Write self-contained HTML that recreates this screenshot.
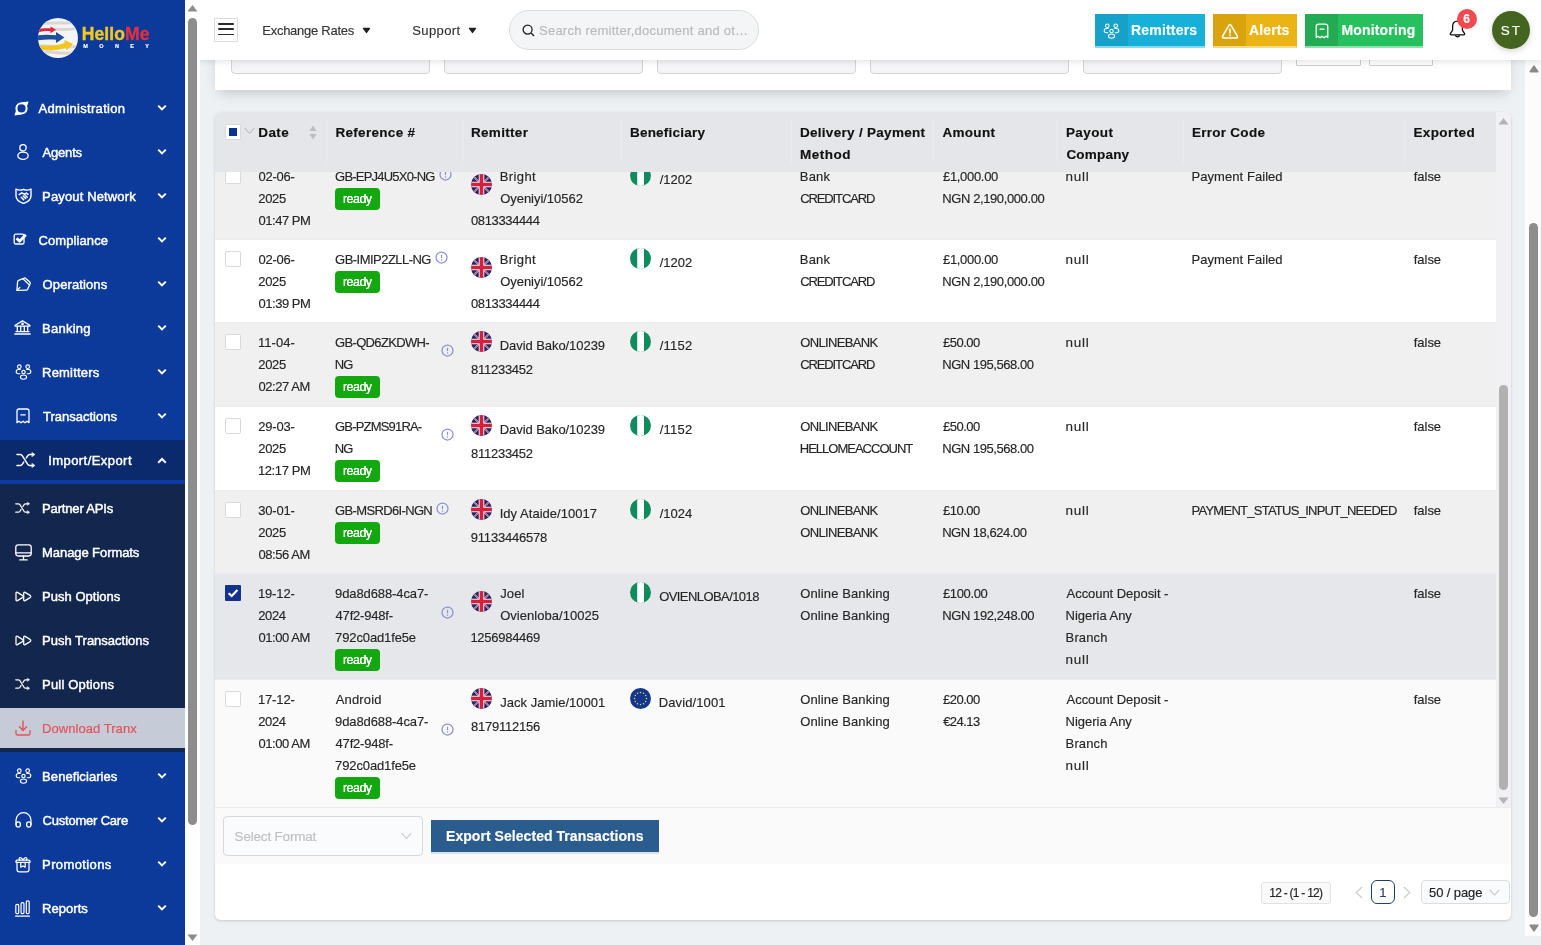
<!DOCTYPE html>
<html lang="en"><head><meta charset="utf-8"><title>HelloMe Money - Download Tranx</title>
<style>
*{box-sizing:border-box}
html,body{margin:0;padding:0;background:#eef1f3}
body{width:1541px;height:945px;overflow:hidden;position:relative;font-family:"Liberation Sans",sans-serif;font-size:13px;color:#262626}
#app{position:absolute;left:0;top:0;width:1541px;height:945px;overflow:hidden;will-change:transform}
#app div,#app span.t,#app svg,#app i{position:absolute}
.t{white-space:pre;display:block;line-height:22px;-webkit-text-stroke:.15px currentColor}
.sb .t{color:#fff}
.chk{width:16px;height:16px;background:#fff;border:1px solid #d9d9d9;border-radius:2px}
.badge{width:45px;height:22px;background:#13a710;border-radius:4px}
.inp{border:1px solid #d4d4d4;border-radius:4px;background:#f5f5f7}
</style></head><body><div id="app">
<main>
<div style="left:215px;top:0px;width:1296px;height:90px;background:#fff;box-shadow:0 6px 13px -4px rgba(0,0,0,.2)"></div>
<div class="inp" style="left:231px;top:30px;width:199px;height:44px;"></div>
<div class="inp" style="left:444px;top:30px;width:199px;height:44px;"></div>
<div class="inp" style="left:657px;top:30px;width:199px;height:44px;"></div>
<div class="inp" style="left:870px;top:30px;width:199px;height:44px;"></div>
<div class="inp" style="left:1083px;top:30px;width:199px;height:44px;"></div>
<div style="left:1296px;top:30px;width:65px;height:36px;border:1px solid #cfcfcf;border-radius:1px;background:#fff"></div>
<div style="left:1369px;top:30px;width:64px;height:36px;border:1px solid #cfcfcf;border-radius:1px;background:#fff"></div>
<div style="left:215px;top:112px;width:1296px;height:808px;background:#fff;border-radius:6px;box-shadow:0 1px 3px rgba(0,0,0,.16)"></div>
<section>
<div style="left:215px;top:157px;width:1281px;height:83px;background:#f0f0f0;border-bottom:1px solid #ececec"></div>
<div class="chk" style="left:225px;top:168px;width:16px;height:16px;"></div>
<span class="t" style="left:258.49px;top:166px;letter-spacing:-0.24px;">02-06-</span>
<span class="t" style="left:258.32px;top:188px;letter-spacing:-0.33px;">2025</span>
<span class="t" style="left:258.49px;top:210px;letter-spacing:-0.46px;">01:47 PM</span>
<span class="t" style="left:335.09px;top:166px;letter-spacing:-0.79px;">GB-EPJ4U5X0-NG</span>
<div class="badge" style="left:335px;top:188px;width:45px;height:22px;"></div>
<span class="t" style="left:343.00px;top:188px;font-size:12.5px;color:#fff;letter-spacing:-0.55px;text-shadow:0 0 .5px #fff;">ready</span>
<svg style="left:438.7px;top:167.5px" width="13" height="13" viewBox="0 0 13 13"><circle cx="6.5" cy="6.5" r="5.5" fill="none" stroke="#8c90d2" stroke-width="1.25"/><path d="M6.5 3.8V7.2" stroke="#8c90d2" stroke-width="1.2"/><circle cx="6.5" cy="9.1" r=".75" fill="#8c90d2"/></svg>
<svg style="left:471px;top:174px;border-radius:50%" width="21" height="21" viewBox="0 0 21 21"><g><rect width="21" height="21" fill="#2a2460"/><path d="M0 0L21 21M21 0L0 21" stroke="#b9b0cc" stroke-width="1.8"/><path d="M0 0L21 21M21 0L0 21" stroke="#c8364f" stroke-width=".6"/><path d="M10.5 0V21M0 10.5H21" stroke="#f6e9ec" stroke-width="5.6"/><path d="M10.5 0V21M0 10.5H21" stroke="#d41f3d" stroke-width="3.6"/></g></svg>
<span class="t" style="left:499.70px;top:166px;letter-spacing:0.40px;">Bright</span>
<span class="t" style="left:500.15px;top:188px;letter-spacing:-0.03px;">Oyeniyi/10562</span>
<span class="t" style="left:470.99px;top:210px;letter-spacing:-0.37px;">0813334444</span>
<svg style="left:630px;top:165px;border-radius:50%" width="21" height="21" viewBox="0 0 21 21"><g><rect width="21" height="21" fill="#0f8c5e"/><rect x="7.2" width="6.8" height="21" fill="#fff"/></g></svg>
<span class="t" style="left:659.70px;top:169px;">/1202</span>
<span class="t" style="left:799.80px;top:166px;letter-spacing:0.16px;">Bank</span>
<span class="t" style="left:800.19px;top:188px;letter-spacing:-1.11px;">CREDITCARD</span>
<span class="t" style="left:943.00px;top:166px;letter-spacing:-0.32px;">£1,000.00</span>
<span class="t" style="left:942.20px;top:188px;letter-spacing:-0.39px;">NGN 2,190,000.00</span>
<span class="t" style="left:1065.60px;top:166px;font-size:13.5px;letter-spacing:0.73px;">null</span>
<span class="t" style="left:1191.50px;top:166px;letter-spacing:0.06px;">Payment Failed</span>
<span class="t" style="left:1413.77px;top:166px;letter-spacing:-0.04px;">false</span>
<div style="left:215px;top:240px;width:1281px;height:83px;background:#ffffff;border-bottom:1px solid #ececec"></div>
<div class="chk" style="left:225px;top:251px;width:16px;height:16px;"></div>
<span class="t" style="left:258.49px;top:249px;letter-spacing:-0.24px;">02-06-</span>
<span class="t" style="left:258.32px;top:271px;letter-spacing:-0.33px;">2025</span>
<span class="t" style="left:258.49px;top:293px;letter-spacing:-0.46px;">01:39 PM</span>
<span class="t" style="left:335.09px;top:249px;letter-spacing:-0.53px;">GB-IMIP2ZLL-NG</span>
<div class="badge" style="left:335px;top:271px;width:45px;height:22px;"></div>
<span class="t" style="left:343.00px;top:271px;font-size:12.5px;color:#fff;letter-spacing:-0.55px;text-shadow:0 0 .5px #fff;">ready</span>
<svg style="left:434.7px;top:250.5px" width="13" height="13" viewBox="0 0 13 13"><circle cx="6.5" cy="6.5" r="5.5" fill="none" stroke="#8c90d2" stroke-width="1.25"/><path d="M6.5 3.8V7.2" stroke="#8c90d2" stroke-width="1.2"/><circle cx="6.5" cy="9.1" r=".75" fill="#8c90d2"/></svg>
<svg style="left:471px;top:257px;border-radius:50%" width="21" height="21" viewBox="0 0 21 21"><g><rect width="21" height="21" fill="#2a2460"/><path d="M0 0L21 21M21 0L0 21" stroke="#b9b0cc" stroke-width="1.8"/><path d="M0 0L21 21M21 0L0 21" stroke="#c8364f" stroke-width=".6"/><path d="M10.5 0V21M0 10.5H21" stroke="#f6e9ec" stroke-width="5.6"/><path d="M10.5 0V21M0 10.5H21" stroke="#d41f3d" stroke-width="3.6"/></g></svg>
<span class="t" style="left:499.70px;top:249px;letter-spacing:0.40px;">Bright</span>
<span class="t" style="left:500.15px;top:271px;letter-spacing:-0.03px;">Oyeniyi/10562</span>
<span class="t" style="left:470.99px;top:293px;letter-spacing:-0.37px;">0813334444</span>
<svg style="left:630px;top:248px;border-radius:50%" width="21" height="21" viewBox="0 0 21 21"><g><rect width="21" height="21" fill="#0f8c5e"/><rect x="7.2" width="6.8" height="21" fill="#fff"/></g></svg>
<span class="t" style="left:659.70px;top:252px;">/1202</span>
<span class="t" style="left:799.80px;top:249px;letter-spacing:0.16px;">Bank</span>
<span class="t" style="left:800.19px;top:271px;letter-spacing:-1.11px;">CREDITCARD</span>
<span class="t" style="left:943.00px;top:249px;letter-spacing:-0.32px;">£1,000.00</span>
<span class="t" style="left:942.20px;top:271px;letter-spacing:-0.39px;">NGN 2,190,000.00</span>
<span class="t" style="left:1065.60px;top:249px;font-size:13.5px;letter-spacing:0.73px;">null</span>
<span class="t" style="left:1191.50px;top:249px;letter-spacing:0.06px;">Payment Failed</span>
<span class="t" style="left:1413.77px;top:249px;letter-spacing:-0.04px;">false</span>
<div style="left:215px;top:323px;width:1281px;height:84px;background:#f0f0f0;border-bottom:1px solid #ececec"></div>
<div class="chk" style="left:225px;top:334px;width:16px;height:16px;"></div>
<span class="t" style="left:257.90px;top:332px;letter-spacing:0.08px;">11-04-</span>
<span class="t" style="left:258.32px;top:354px;letter-spacing:-0.33px;">2025</span>
<span class="t" style="left:258.49px;top:376px;letter-spacing:-0.45px;">02:27 AM</span>
<span class="t" style="left:335.09px;top:332px;letter-spacing:-0.67px;">GB-QD6ZKDWH-</span>
<span class="t" style="left:334.70px;top:354px;letter-spacing:-0.82px;">NG</span>
<div class="badge" style="left:335px;top:376px;width:45px;height:22px;"></div>
<span class="t" style="left:343.00px;top:376px;font-size:12.5px;color:#fff;letter-spacing:-0.55px;text-shadow:0 0 .5px #fff;">ready</span>
<svg style="left:441.1px;top:343.9px" width="13" height="13" viewBox="0 0 13 13"><circle cx="6.5" cy="6.5" r="5.5" fill="none" stroke="#8c90d2" stroke-width="1.25"/><path d="M6.5 3.8V7.2" stroke="#8c90d2" stroke-width="1.2"/><circle cx="6.5" cy="9.1" r=".75" fill="#8c90d2"/></svg>
<svg style="left:471px;top:331px;border-radius:50%" width="21" height="21" viewBox="0 0 21 21"><g><rect width="21" height="21" fill="#2a2460"/><path d="M0 0L21 21M21 0L0 21" stroke="#b9b0cc" stroke-width="1.8"/><path d="M0 0L21 21M21 0L0 21" stroke="#c8364f" stroke-width=".6"/><path d="M10.5 0V21M0 10.5H21" stroke="#f6e9ec" stroke-width="5.6"/><path d="M10.5 0V21M0 10.5H21" stroke="#d41f3d" stroke-width="3.6"/></g></svg>
<span class="t" style="left:499.70px;top:335px;letter-spacing:-0.06px;">David Bako/10239</span>
<span class="t" style="left:470.90px;top:359px;letter-spacing:-0.24px;">811233452</span>
<svg style="left:630px;top:331px;border-radius:50%" width="21" height="21" viewBox="0 0 21 21"><g><rect width="21" height="21" fill="#0f8c5e"/><rect x="7.2" width="6.8" height="21" fill="#fff"/></g></svg>
<span class="t" style="left:659.70px;top:335px;letter-spacing:0.25px;">/1152</span>
<span class="t" style="left:800.25px;top:332px;letter-spacing:-0.65px;">ONLINEBANK</span>
<span class="t" style="left:800.19px;top:354px;letter-spacing:-1.11px;">CREDITCARD</span>
<span class="t" style="left:943.00px;top:332px;letter-spacing:-0.52px;">£50.00</span>
<span class="t" style="left:942.20px;top:354px;letter-spacing:-0.45px;">NGN 195,568.00</span>
<span class="t" style="left:1065.60px;top:332px;font-size:13.5px;letter-spacing:0.73px;">null</span>
<span class="t" style="left:1413.77px;top:332px;letter-spacing:-0.04px;">false</span>
<div style="left:215px;top:407px;width:1281px;height:84px;background:#ffffff;border-bottom:1px solid #ececec"></div>
<div class="chk" style="left:225px;top:418px;width:16px;height:16px;"></div>
<span class="t" style="left:258.32px;top:416px;letter-spacing:-0.20px;">29-03-</span>
<span class="t" style="left:258.32px;top:438px;letter-spacing:-0.33px;">2025</span>
<span class="t" style="left:257.90px;top:460px;letter-spacing:-0.38px;">12:17 PM</span>
<span class="t" style="left:335.09px;top:416px;letter-spacing:-0.82px;">GB-PZMS91RA-</span>
<span class="t" style="left:334.70px;top:438px;letter-spacing:-0.82px;">NG</span>
<div class="badge" style="left:335px;top:460px;width:45px;height:22px;"></div>
<span class="t" style="left:343.00px;top:460px;font-size:12.5px;color:#fff;letter-spacing:-0.55px;text-shadow:0 0 .5px #fff;">ready</span>
<svg style="left:441.1px;top:427.9px" width="13" height="13" viewBox="0 0 13 13"><circle cx="6.5" cy="6.5" r="5.5" fill="none" stroke="#8c90d2" stroke-width="1.25"/><path d="M6.5 3.8V7.2" stroke="#8c90d2" stroke-width="1.2"/><circle cx="6.5" cy="9.1" r=".75" fill="#8c90d2"/></svg>
<svg style="left:471px;top:415px;border-radius:50%" width="21" height="21" viewBox="0 0 21 21"><g><rect width="21" height="21" fill="#2a2460"/><path d="M0 0L21 21M21 0L0 21" stroke="#b9b0cc" stroke-width="1.8"/><path d="M0 0L21 21M21 0L0 21" stroke="#c8364f" stroke-width=".6"/><path d="M10.5 0V21M0 10.5H21" stroke="#f6e9ec" stroke-width="5.6"/><path d="M10.5 0V21M0 10.5H21" stroke="#d41f3d" stroke-width="3.6"/></g></svg>
<span class="t" style="left:499.70px;top:419px;letter-spacing:-0.06px;">David Bako/10239</span>
<span class="t" style="left:470.90px;top:443px;letter-spacing:-0.24px;">811233452</span>
<svg style="left:630px;top:415px;border-radius:50%" width="21" height="21" viewBox="0 0 21 21"><g><rect width="21" height="21" fill="#0f8c5e"/><rect x="7.2" width="6.8" height="21" fill="#fff"/></g></svg>
<span class="t" style="left:659.70px;top:419px;letter-spacing:0.25px;">/1152</span>
<span class="t" style="left:800.25px;top:416px;letter-spacing:-0.65px;">ONLINEBANK</span>
<span class="t" style="left:799.80px;top:438px;letter-spacing:-1.00px;">HELLOMEACCOUNT</span>
<span class="t" style="left:943.00px;top:416px;letter-spacing:-0.52px;">£50.00</span>
<span class="t" style="left:942.20px;top:438px;letter-spacing:-0.45px;">NGN 195,568.00</span>
<span class="t" style="left:1065.60px;top:416px;font-size:13.5px;letter-spacing:0.73px;">null</span>
<span class="t" style="left:1413.77px;top:416px;letter-spacing:-0.04px;">false</span>
<div style="left:215px;top:491px;width:1281px;height:83px;background:#f0f0f0;border-bottom:1px solid #ececec"></div>
<div class="chk" style="left:225px;top:502px;width:16px;height:16px;"></div>
<span class="t" style="left:258.23px;top:500px;letter-spacing:-0.19px;">30-01-</span>
<span class="t" style="left:258.32px;top:522px;letter-spacing:-0.33px;">2025</span>
<span class="t" style="left:258.49px;top:544px;letter-spacing:-0.45px;">08:56 AM</span>
<span class="t" style="left:335.09px;top:500px;letter-spacing:-0.65px;">GB-MSRD6I-NGN</span>
<div class="badge" style="left:335px;top:522px;width:45px;height:22px;"></div>
<span class="t" style="left:343.00px;top:522px;font-size:12.5px;color:#fff;letter-spacing:-0.55px;text-shadow:0 0 .5px #fff;">ready</span>
<svg style="left:435.7px;top:501.5px" width="13" height="13" viewBox="0 0 13 13"><circle cx="6.5" cy="6.5" r="5.5" fill="none" stroke="#8c90d2" stroke-width="1.25"/><path d="M6.5 3.8V7.2" stroke="#8c90d2" stroke-width="1.2"/><circle cx="6.5" cy="9.1" r=".75" fill="#8c90d2"/></svg>
<svg style="left:471px;top:499px;border-radius:50%" width="21" height="21" viewBox="0 0 21 21"><g><rect width="21" height="21" fill="#2a2460"/><path d="M0 0L21 21M21 0L0 21" stroke="#b9b0cc" stroke-width="1.8"/><path d="M0 0L21 21M21 0L0 21" stroke="#c8364f" stroke-width=".6"/><path d="M10.5 0V21M0 10.5H21" stroke="#f6e9ec" stroke-width="5.6"/><path d="M10.5 0V21M0 10.5H21" stroke="#d41f3d" stroke-width="3.6"/></g></svg>
<span class="t" style="left:499.70px;top:503px;letter-spacing:0.03px;">Idy Ataide/10017</span>
<span class="t" style="left:470.81px;top:527px;letter-spacing:-0.21px;">91133446578</span>
<svg style="left:630px;top:499px;border-radius:50%" width="21" height="21" viewBox="0 0 21 21"><g><rect width="21" height="21" fill="#0f8c5e"/><rect x="7.2" width="6.8" height="21" fill="#fff"/></g></svg>
<span class="t" style="left:659.70px;top:503px;">/1024</span>
<span class="t" style="left:800.25px;top:500px;letter-spacing:-0.65px;">ONLINEBANK</span>
<span class="t" style="left:800.25px;top:522px;letter-spacing:-0.65px;">ONLINEBANK</span>
<span class="t" style="left:943.00px;top:500px;letter-spacing:-0.52px;">£10.00</span>
<span class="t" style="left:942.20px;top:522px;letter-spacing:-0.47px;">NGN 18,624.00</span>
<span class="t" style="left:1065.60px;top:500px;font-size:13.5px;letter-spacing:0.73px;">null</span>
<span class="t" style="left:1191.50px;top:500px;letter-spacing:-0.74px;">PAYMENT_STATUS_INPUT_NEEDED</span>
<span class="t" style="left:1413.77px;top:500px;letter-spacing:-0.04px;">false</span>
<div style="left:215px;top:574px;width:1281px;height:106px;background:#e6e7ea;border-bottom:1px solid #ececec"></div>
<div style="left:225px;top:585px;width:16px;height:16px;background:#12328c;border-radius:1px"><svg style="left:2px;top:3px" width="12" height="10" viewBox="0 0 12 10"><path d="M1.6 5.2L4.7 8L10.4 2" fill="none" stroke="#fff" stroke-width="2.2"/></svg></div>
<span class="t" style="left:257.90px;top:583px;letter-spacing:-0.12px;">19-12-</span>
<span class="t" style="left:258.32px;top:605px;letter-spacing:-0.43px;">2024</span>
<span class="t" style="left:258.49px;top:627px;letter-spacing:-0.45px;">01:00 AM</span>
<span class="t" style="left:335.11px;top:583px;letter-spacing:-0.11px;">9da8d688-4ca7-</span>
<span class="t" style="left:335.59px;top:605px;letter-spacing:-0.20px;">47f2-948f-</span>
<span class="t" style="left:335.12px;top:627px;letter-spacing:-0.13px;">792c0ad1fe5e</span>
<div class="badge" style="left:335px;top:649px;width:45px;height:22px;"></div>
<span class="t" style="left:343.00px;top:649px;font-size:12.5px;color:#fff;letter-spacing:-0.55px;text-shadow:0 0 .5px #fff;">ready</span>
<svg style="left:441.1px;top:605.9px" width="13" height="13" viewBox="0 0 13 13"><circle cx="6.5" cy="6.5" r="5.5" fill="none" stroke="#8c90d2" stroke-width="1.25"/><path d="M6.5 3.8V7.2" stroke="#8c90d2" stroke-width="1.2"/><circle cx="6.5" cy="9.1" r=".75" fill="#8c90d2"/></svg>
<svg style="left:471px;top:591px;border-radius:50%" width="21" height="21" viewBox="0 0 21 21"><g><rect width="21" height="21" fill="#2a2460"/><path d="M0 0L21 21M21 0L0 21" stroke="#b9b0cc" stroke-width="1.8"/><path d="M0 0L21 21M21 0L0 21" stroke="#c8364f" stroke-width=".6"/><path d="M10.5 0V21M0 10.5H21" stroke="#f6e9ec" stroke-width="5.6"/><path d="M10.5 0V21M0 10.5H21" stroke="#d41f3d" stroke-width="3.6"/></g></svg>
<span class="t" style="left:500.24px;top:583px;letter-spacing:0.09px;">Joel</span>
<span class="t" style="left:500.15px;top:605px;letter-spacing:0.04px;">Ovienloba/10025</span>
<span class="t" style="left:470.40px;top:627px;letter-spacing:-0.27px;">1256984469</span>
<svg style="left:630px;top:582px;border-radius:50%" width="21" height="21" viewBox="0 0 21 21"><g><rect width="21" height="21" fill="#0f8c5e"/><rect x="7.2" width="6.8" height="21" fill="#fff"/></g></svg>
<span class="t" style="left:659.15px;top:586px;letter-spacing:-0.57px;">OVIENLOBA/1018</span>
<span class="t" style="left:800.25px;top:583px;letter-spacing:0.11px;">Online Banking</span>
<span class="t" style="left:800.25px;top:605px;letter-spacing:0.11px;">Online Banking</span>
<span class="t" style="left:943.00px;top:583px;letter-spacing:-0.36px;">£100.00</span>
<span class="t" style="left:942.20px;top:605px;letter-spacing:-0.40px;">NGN 192,248.00</span>
<span class="t" style="left:1066.57px;top:583px;letter-spacing:-0.05px;">Account Deposit -</span>
<span class="t" style="left:1065.60px;top:605px;letter-spacing:-0.02px;">Nigeria Any</span>
<span class="t" style="left:1065.60px;top:627px;letter-spacing:0.14px;">Branch</span>
<span class="t" style="left:1065.60px;top:649px;font-size:13.5px;letter-spacing:0.73px;">null</span>
<span class="t" style="left:1413.77px;top:583px;letter-spacing:-0.04px;">false</span>
<div style="left:215px;top:680px;width:1281px;height:128px;background:#fafafa;border-bottom:1px solid #ececec"></div>
<div class="chk" style="left:225px;top:691px;width:16px;height:16px;"></div>
<span class="t" style="left:257.90px;top:689px;letter-spacing:-0.12px;">17-12-</span>
<span class="t" style="left:258.32px;top:711px;letter-spacing:-0.43px;">2024</span>
<span class="t" style="left:258.49px;top:733px;letter-spacing:-0.45px;">01:00 AM</span>
<span class="t" style="left:335.67px;top:689px;letter-spacing:0.17px;">Android</span>
<span class="t" style="left:335.11px;top:711px;letter-spacing:-0.11px;">9da8d688-4ca7-</span>
<span class="t" style="left:335.59px;top:733px;letter-spacing:-0.20px;">47f2-948f-</span>
<span class="t" style="left:335.12px;top:755px;letter-spacing:-0.13px;">792c0ad1fe5e</span>
<div class="badge" style="left:335px;top:777px;width:45px;height:22px;"></div>
<span class="t" style="left:343.00px;top:777px;font-size:12.5px;color:#fff;letter-spacing:-0.55px;text-shadow:0 0 .5px #fff;">ready</span>
<svg style="left:441.1px;top:722.9px" width="13" height="13" viewBox="0 0 13 13"><circle cx="6.5" cy="6.5" r="5.5" fill="none" stroke="#8c90d2" stroke-width="1.25"/><path d="M6.5 3.8V7.2" stroke="#8c90d2" stroke-width="1.2"/><circle cx="6.5" cy="9.1" r=".75" fill="#8c90d2"/></svg>
<svg style="left:471px;top:688px;border-radius:50%" width="21" height="21" viewBox="0 0 21 21"><g><rect width="21" height="21" fill="#2a2460"/><path d="M0 0L21 21M21 0L0 21" stroke="#b9b0cc" stroke-width="1.8"/><path d="M0 0L21 21M21 0L0 21" stroke="#c8364f" stroke-width=".6"/><path d="M10.5 0V21M0 10.5H21" stroke="#f6e9ec" stroke-width="5.6"/><path d="M10.5 0V21M0 10.5H21" stroke="#d41f3d" stroke-width="3.6"/></g></svg>
<span class="t" style="left:500.24px;top:692px;letter-spacing:0.02px;">Jack Jamie/10001</span>
<span class="t" style="left:470.90px;top:716px;letter-spacing:-0.21px;">8179112156</span>
<svg style="left:630px;top:688px" width="21" height="21" viewBox="0 0 21 21"><circle cx="10.5" cy="10.5" r="10.5" fill="#14368c"/><circle cx="10.50" cy="4.50" r="0.75" fill="#ead35e"/><circle cx="13.50" cy="5.30" r="0.75" fill="#ead35e"/><circle cx="15.70" cy="7.50" r="0.75" fill="#ead35e"/><circle cx="16.50" cy="10.50" r="0.75" fill="#ead35e"/><circle cx="15.70" cy="13.50" r="0.75" fill="#ead35e"/><circle cx="13.50" cy="15.70" r="0.75" fill="#ead35e"/><circle cx="10.50" cy="16.50" r="0.75" fill="#ead35e"/><circle cx="7.50" cy="15.70" r="0.75" fill="#ead35e"/><circle cx="5.30" cy="13.50" r="0.75" fill="#ead35e"/><circle cx="4.50" cy="10.50" r="0.75" fill="#ead35e"/><circle cx="5.30" cy="7.50" r="0.75" fill="#ead35e"/><circle cx="7.50" cy="5.30" r="0.75" fill="#ead35e"/></svg>
<span class="t" style="left:658.70px;top:692px;letter-spacing:0.11px;">David/1001</span>
<span class="t" style="left:800.25px;top:689px;letter-spacing:0.11px;">Online Banking</span>
<span class="t" style="left:800.25px;top:711px;letter-spacing:0.11px;">Online Banking</span>
<span class="t" style="left:943.00px;top:689px;letter-spacing:-0.52px;">£20.00</span>
<span class="t" style="left:943.17px;top:711px;letter-spacing:-0.55px;">€24.13</span>
<span class="t" style="left:1066.57px;top:689px;letter-spacing:-0.05px;">Account Deposit -</span>
<span class="t" style="left:1065.60px;top:711px;letter-spacing:-0.02px;">Nigeria Any</span>
<span class="t" style="left:1065.60px;top:733px;letter-spacing:0.14px;">Branch</span>
<span class="t" style="left:1065.60px;top:755px;font-size:13.5px;letter-spacing:0.73px;">null</span>
<span class="t" style="left:1413.77px;top:689px;letter-spacing:-0.04px;">false</span>
<div style="left:215px;top:112px;width:1296px;height:60px;background:#e5e6ea;border-radius:6px 6px 0 0"></div>
<div style="left:225px;top:124px;width:16px;height:16px;background:#fff;border:1px solid #d9d9d9;border-radius:2px"><div style="left:3px;top:3px;width:8px;height:8px;background:#0a3396"></div></div>
<svg style="left:244px;top:127px" width="11" height="8" viewBox="0 0 11 8"><path d="M.7 1L5.5 6.5L10.3 1" fill="none" stroke="#b0b0b0" stroke-width="1"/></svg>
<svg style="left:309px;top:125px" width="8" height="15" viewBox="0 0 8 15"><path d="M4 .5L7.6 6H.4z" fill="#bdbdbd"/><path d="M4 14.5L7.6 9H.4z" fill="#bdbdbd"/></svg>
<span class="t" style="left:258.30px;top:122px;font-size:13.5px;font-weight:700;color:#111;letter-spacing:0.36px;">Date</span>
<span class="t" style="left:335.40px;top:122px;font-size:13.5px;font-weight:700;color:#111;letter-spacing:0.31px;">Reference #</span>
<span class="t" style="left:470.90px;top:122px;font-size:13.5px;font-weight:700;color:#111;letter-spacing:0.33px;">Remitter</span>
<span class="t" style="left:629.90px;top:122px;font-size:13.5px;font-weight:700;color:#111;letter-spacing:0.24px;">Beneficiary</span>
<span class="t" style="left:799.90px;top:122px;font-size:13.5px;font-weight:700;color:#111;letter-spacing:0.30px;">Delivery / Payment</span>
<span class="t" style="left:799.90px;top:144px;font-size:13.5px;font-weight:700;color:#111;letter-spacing:0.50px;">Method</span>
<span class="t" style="left:942.50px;top:122px;font-size:13.5px;font-weight:700;color:#111;letter-spacing:0.29px;">Amount</span>
<span class="t" style="left:1065.90px;top:122px;font-size:13.5px;font-weight:700;color:#111;letter-spacing:0.41px;">Payout</span>
<span class="t" style="left:1066.43px;top:144px;font-size:13.5px;font-weight:700;color:#111;letter-spacing:0.19px;">Company</span>
<span class="t" style="left:1191.90px;top:122px;font-size:13.5px;font-weight:700;color:#111;letter-spacing:0.28px;">Error Code</span>
<span class="t" style="left:1413.40px;top:122px;font-size:13.5px;font-weight:700;color:#111;letter-spacing:0.40px;">Exported</span>
<div style="left:326px;top:120px;width:1px;height:44px;background:rgba(255,255,255,.22)"></div>
<div style="left:461.5px;top:120px;width:1px;height:44px;background:rgba(255,255,255,.22)"></div>
<div style="left:621px;top:120px;width:1px;height:44px;background:rgba(255,255,255,.22)"></div>
<div style="left:791px;top:120px;width:1px;height:44px;background:rgba(255,255,255,.22)"></div>
<div style="left:933px;top:120px;width:1px;height:44px;background:rgba(255,255,255,.22)"></div>
<div style="left:1057px;top:120px;width:1px;height:44px;background:rgba(255,255,255,.22)"></div>
<div style="left:1183px;top:120px;width:1px;height:44px;background:rgba(255,255,255,.22)"></div>
<div style="left:1404px;top:120px;width:1px;height:44px;background:rgba(255,255,255,.22)"></div>
<div style="left:1496px;top:112px;width:15px;height:696px;background:#f1f1f3;border-radius:0 6px 0 0"></div>
<svg style="left:1498px;top:118px" width="11" height="7" viewBox="0 0 11 7"><path d="M5.5 0L10.5 6.5H.5z" fill="#b4b4b4"/></svg>
<svg style="left:1498px;top:797px" width="11" height="7" viewBox="0 0 11 7"><path d="M5.5 7L10.5 .5H.5z" fill="#b4b4b4"/></svg>
<div style="left:1499px;top:385px;width:9px;height:405px;background:#b1b1b1;border-radius:5px"></div>
<div style="left:215px;top:807px;width:1296px;height:57px;background:#fafafa;border-top:1px solid #ececec"></div>
<div style="left:223px;top:816px;width:200px;height:40px;border:1px solid #d9d9d9;border-radius:4px;background:#fafbfd"></div>
<span class="t" style="left:234.60px;top:826px;font-size:13.5px;color:#bfbfbf;letter-spacing:-0.19px;">Select Format</span>
<svg style="left:401px;top:832px" width="11" height="8" viewBox="0 0 11 8"><path d="M.7 1L5.5 6.5L10.3 1" fill="none" stroke="#c4c4c4" stroke-width="1.1"/></svg>
<div style="left:431px;top:820px;width:228px;height:32px;background:#2a5c8e;box-shadow:0 2px 0 rgba(42,92,142,.15)"></div>
<span class="t" style="left:446.00px;top:825px;font-size:14px;font-weight:700;color:#fff;letter-spacing:0.05px;">Export Selected Transactions</span>
<div style="left:1261px;top:882px;width:70px;height:22px;border:1px solid #e2e2e2;border-radius:3px;background:#fafafa"></div>
<span class="t" style="left:1269.30px;top:882px;font-size:12px;color:#222;letter-spacing:-0.75px;">12 - (1 - 12)</span>
<svg style="left:1355px;top:886px" width="8" height="13" viewBox="0 0 8 13"><path d="M7 1L1.2 6.5L7 12" fill="none" stroke="#c8c8c8" stroke-width="1.1"/></svg>
<div style="left:1371px;top:880px;width:24px;height:24px;border:1px solid #1d3d6b;border-radius:6px;background:#fff"></div>
<span class="t" style="left:1379.20px;top:882px;color:#2b3f63;">1</span>
<svg style="left:1403px;top:886px" width="8" height="13" viewBox="0 0 8 13"><path d="M1 1L6.8 6.5L1 12" fill="none" stroke="#c8c8c8" stroke-width="1.1"/></svg>
<div style="left:1421px;top:880px;width:89px;height:24px;border:1px solid #dcdcdc;border-radius:4px;background:#fafbfd"></div>
<span class="t" style="left:1429.00px;top:882px;color:#222;letter-spacing:-0.10px;">50 / page</span>
<svg style="left:1489px;top:889px" width="11" height="7" viewBox="0 0 11 7"><path d="M.7 .8L5.5 6L10.3 .8" fill="none" stroke="#c4c4c4" stroke-width="1.1"/></svg>
</section></main>
<div style="left:1525px;top:60px;width:16px;height:876px;background:#fcfcfc"></div>
<svg style="left:1528.5px;top:64.5px" width="10" height="8" viewBox="0 0 10 8"><path d="M5 1.2L8.8 6.6H1.2z" fill="#8a8a8a" stroke="#8a8a8a" stroke-width="1.6" stroke-linejoin="round"/></svg>
<svg style="left:1528.5px;top:923.5px" width="10" height="8" viewBox="0 0 10 8"><path d="M5 6.8L8.8 1.4H1.2z" fill="#8a8a8a" stroke="#8a8a8a" stroke-width="1.6" stroke-linejoin="round"/></svg>
<div style="left:1529px;top:223px;width:9px;height:694px;background:#8d8d8d;border-radius:5px"></div>
<header>
<div style="left:200px;top:0px;width:1341px;height:60px;background:#fff;box-shadow:0 2px 6px rgba(0,0,0,.11)"></div>
<div style="left:214px;top:18px;width:24px;height:24px;border:1px solid #dcdcdc;background:#fff"><div style="left:3.2px;top:4.2px;width:15.6px;height:1.8px;background:#2b2b2b;border-radius:1px"></div><div style="left:3.2px;top:9.4px;width:15.6px;height:1.8px;background:#2b2b2b;border-radius:1px"></div><div style="left:3.2px;top:14.5px;width:15.6px;height:1.8px;background:#2b2b2b;border-radius:1px"></div></div>
<span class="t" style="left:262.30px;top:20px;color:#333;letter-spacing:-0.27px;">Exchange Rates</span>
<svg style="left:361.8px;top:26.6px" width="9" height="7" viewBox="0 0 9 7"><path d="M1.500 1.400H7.500L4.500 5.400z" fill="#222" stroke="#222" stroke-width="1.400" stroke-linejoin="round"/></svg>
<span class="t" style="left:412.20px;top:20px;color:#333;letter-spacing:0.41px;">Support</span>
<svg style="left:468.4px;top:26.6px" width="9" height="7" viewBox="0 0 9 7"><path d="M1.500 1.400H7.500L4.500 5.400z" fill="#222" stroke="#222" stroke-width="1.400" stroke-linejoin="round"/></svg>
<div style="left:509px;top:10px;width:250px;height:40px;border:1px solid #dcdcdc;border-radius:20px;background:#f4f5f7"></div>
<svg style="left:521.500px;top:23.500px" width="13" height="13" viewBox="0 0 13 13"><circle cx="5.600" cy="5.600" r="4.500" fill="none" stroke="#222" stroke-width="1.300"/><path d="M9 9L12 12" stroke="#222" stroke-width="1.400"/></svg>
<span class="t" style="left:539.00px;top:20px;color:#b9b9b9;letter-spacing:0.24px;">Search remitter,document and ot…</span>
<div style="left:1095px;top:14px;width:110px;height:32px;background:#17b0d8;box-shadow:0 2px 0 #17b0d880"></div>
<div style="left:1095px;top:14px;width:33px;height:32px;background:#15a1c8"></div>
<svg style="left:1103.4px;top:22.5px" width="17" height="16" viewBox="0 0 17 16" fill="none" stroke="#fff" stroke-width="1.05" stroke-linecap="round" stroke-linejoin="round"><circle cx="4.300" cy="2.700" r="1.800"/><circle cx="12.700" cy="2.700" r="1.800"/><circle cx="8.500" cy="8" r="1.700"/><ellipse cx="8.500" cy="13.100" rx="3.100" ry="2.100"/><path d="M4.800 9.700H3.300a2.100 2.100 0 0 1 0-4.200H5.300M12.200 9.700H13.700a2.100 2.100 0 0 0 0-4.200H11.700"/></svg>
<span class="t" style="left:1131.00px;top:19px;font-size:14px;font-weight:700;color:#fff;letter-spacing:0.19px;">Remitters</span>
<div style="left:1213px;top:14px;width:84px;height:32px;background:#e9b414;box-shadow:0 2px 0 #e9b41480"></div>
<div style="left:1213px;top:14px;width:33px;height:32px;background:#d9a30d"></div>
<svg style="left:1221px;top:22.6px" width="18" height="17" viewBox="0 0 18 17" fill="none" stroke="#fff" stroke-width="1.5" stroke-linecap="round" stroke-linejoin="round"><path d="M7.900 2.300Q9 .6 10.100 2.300L16.300 13Q17.200 14.900 15.200 14.900H2.800Q.8 14.900 1.700 13z"/><path d="M9 6.200V9.800M9 12.100V12.300" stroke-width="1.700"/></svg>
<span class="t" style="left:1248.91px;top:19px;font-size:14px;font-weight:700;color:#fff;letter-spacing:0.16px;">Alerts</span>
<div style="left:1305px;top:14px;width:118px;height:32px;background:#26c05f;box-shadow:0 2px 0 #26c05f80"></div>
<div style="left:1305px;top:14px;width:33px;height:32px;background:#22ab52"></div>
<svg style="left:1314.5px;top:22.5px" width="14" height="16" viewBox="0 0 14 16" fill="none" stroke="#fff" stroke-width="1.25" stroke-linecap="round" stroke-linejoin="round"><path d="M1.200 14.600V3.600A2.600 2.600 0 0 1 3.800 1H10.200A2.600 2.600 0 0 1 12.800 3.600V14.600L11 13.200L9 14.800L7 13.200L5 14.800L3 13.200z"/><path d="M5 6.200H9"/></svg>
<span class="t" style="left:1341.40px;top:19px;font-size:14px;font-weight:700;color:#fff;letter-spacing:0.17px;">Monitoring</span>
<svg style="left:1449px;top:20px" width="17" height="19" viewBox="0 0 17 19" fill="none" stroke="#111" stroke-width="1.300" stroke-linejoin="round"><path d="M8.500 1.200C5.400 1.200 3.600 3.600 3.600 6.600V10.200L1.400 13.600C1.100 14.200 1.400 14.800 2.100 14.800H14.900C15.600 14.800 15.900 14.200 15.600 13.600L13.400 10.200V6.600C13.400 3.600 11.600 1.200 8.500 1.200z"/><path d="M6.400 15.200A2.200 2.200 0 0 0 10.600 15.200"/></svg>
<div style="left:1457px;top:9px;width:20px;height:20px;background:#f5484f;border-radius:10px"></div>
<span class="t" style="left:1463.28px;top:8px;font-size:12px;font-weight:700;color:#fff;">6</span>
<div style="left:1492px;top:11px;width:38px;height:38px;background:#43651f;border-radius:19px;box-shadow:0 2px 6px rgba(0,0,0,.18)"></div>
<span class="t" style="left:1500.80px;top:20px;font-size:13.5px;color:#fff;letter-spacing:-0.78px;">S T</span>
</header>
<aside class="sb">
<div style="left:0px;top:0px;width:185px;height:945px;background:#0c3a9a"></div>
<div style="left:0px;top:440px;width:185px;height:44px;background:#0b2a6d;border-bottom:4px solid #0f3aa6"></div>
<div style="left:0px;top:484px;width:185px;height:268px;background:#13264d"></div>
<div style="left:0px;top:708px;width:185px;height:40px;background:#c5ccd8"></div>
<svg style="left:37px;top:17px" width="42" height="42" viewBox="0 0 42 42">
<defs><clipPath id="lg"><circle cx="21" cy="21" r="20"/></clipPath></defs>
<circle cx="21" cy="21" r="20" fill="#f4f4f6"/>
<g clip-path="url(#lg)">
<path d="M-2 8C10 3 28 9 44 4M-2 14C12 9 30 16 44 10M-2 30C10 26 30 34 44 28M-2 36C10 32 30 40 44 34" stroke="#d9d6d2" stroke-width="3" fill="none"/>
<path d="M1 12.5C6 11 10 11.3 13.5 11.6V9.5L19 12.8L13.5 16.3V14.2C10 13.9 6 14 1 15.5z" fill="#e0263a"/>
<path d="M0 18.5C7 17.3 13 17.8 19 18.2V15L27.5 20.5L19 26V22.8C13 22.4 7 22.3 0 23.5z" fill="#1e4f9e"/>
<path d="M3 28C12 29.5 20 28.5 27.5 26V23L36 27L29 33.5V30.5C21 33.5 12 34.5 4.5 32.5z" fill="#f3c61d"/>
</g></svg>
<span class="t" style="left:81.70px;top:23.3px;font-size:17.5px;font-weight:700;color:#f5c81f;letter-spacing:0.11px;-webkit-text-stroke:.35px currentColor;">Hello<span style="color:#e0303f">Me</span></span>
<span class="t" style="left:83.30px;top:34.6px;font-size:5.5px;font-weight:700;color:#fff;letter-spacing:11.39px;">MONEY</span>
<svg style="left:13.5px;top:100.5px" width="15" height="15" viewBox="0 0 15 15" fill="none" stroke="#fff" stroke-width="2" stroke-linecap="round" stroke-linejoin="round"><circle cx="7.5" cy="7.4" r="5.1"/><path d="M7.500 1.300L14.600 .5L12.800 5.800z" fill="#fff" stroke="none"/><path d="M7.500 13.500L.4 14.400L2.200 9z" fill="#fff" stroke="none"/></svg>
<span class="t" style="left:38.57px;top:98px;color:#fff;letter-spacing:0.32px;-webkit-text-stroke:.45px currentColor;">Administration</span>
<svg style="left:157px;top:103.5px" width="10" height="8" viewBox="0 0 10 8"><path d="M1.200 1.600L5 5.400L8.800 1.600" fill="none" stroke="#fff" stroke-width="2"/></svg>
<svg style="left:16.8px;top:144.4px" width="13" height="16" viewBox="0 0 13 16" fill="none" stroke="#fff" stroke-width="1.3" stroke-linecap="round" stroke-linejoin="round"><circle cx="6" cy="3.800" r="3.200"/><ellipse cx="6" cy="11.700" rx="5.200" ry="3.600"/></svg>
<span class="t" style="left:42.47px;top:142px;color:#fff;letter-spacing:-0.17px;-webkit-text-stroke:.45px currentColor;">Agents</span>
<svg style="left:157px;top:147.5px" width="10" height="8" viewBox="0 0 10 8"><path d="M1.200 1.600L5 5.400L8.800 1.600" fill="none" stroke="#fff" stroke-width="2"/></svg>
<svg style="left:14.5px;top:188.3px" width="17" height="16" viewBox="0 0 17 16" fill="none" stroke="#fff" stroke-width="1.4" stroke-linecap="round" stroke-linejoin="round"><path d="M1 1C3.500 2.400 6 2.400 8.500 1.300C11 2.400 13.500 2.400 16 1V8C16 11.400 12.600 14 8.500 15.400C4.400 14 1 11.400 1 8z"/><path d="M4.200 6.600L6.800 4.800L9.300 6.200L11.300 5.100L13 6.400M6.200 9.200L8.600 11.600M8.200 8L10.600 10.400M10.200 7.200L12.200 9.200" stroke-width="1.500"/></svg>
<span class="t" style="left:42.10px;top:186px;color:#fff;letter-spacing:0.14px;-webkit-text-stroke:.45px currentColor;">Payout Network</span>
<svg style="left:157px;top:191.5px" width="10" height="8" viewBox="0 0 10 8"><path d="M1.200 1.600L5 5.400L8.800 1.600" fill="none" stroke="#fff" stroke-width="2"/></svg>
<svg style="left:13.2px;top:233px" width="15" height="13" viewBox="0 0 15 13" fill="none" stroke="#fff" stroke-width="1.5" stroke-linecap="round" stroke-linejoin="round"><rect x="1.200" y="1.200" width="9.800" height="9.800" rx="1.500" stroke-width="1.300"/><path d="M3.600 5.200L6.600 8.200L12.800 1.800" stroke-width="2.800" stroke-linecap="butt"/></svg>
<span class="t" style="left:38.49px;top:230px;color:#fff;letter-spacing:0.10px;-webkit-text-stroke:.45px currentColor;">Compliance</span>
<svg style="left:157px;top:235.5px" width="10" height="8" viewBox="0 0 10 8"><path d="M1.200 1.600L5 5.400L8.800 1.600" fill="none" stroke="#fff" stroke-width="2"/></svg>
<svg style="left:15.5px;top:276.5px" width="15" height="15" viewBox="0 0 15 15" fill="none" stroke="#fff" stroke-width="1.3" stroke-linecap="round" stroke-linejoin="round"><path d="M.9 13.400L1.600 4.700Q1.700 3.800 2.600 3.400L8.200 1.100Q9.100 .7 9.800 1.400L13.800 5.100Q14.500 5.800 14.100 6.700L11.500 12.500Q11.200 13.200 10.400 13.200z"/><path d="M1.200 13.100L3.900 10.400M7.200 2L13 7.600"/></svg>
<span class="t" style="left:42.55px;top:274px;color:#fff;letter-spacing:0.12px;-webkit-text-stroke:.45px currentColor;">Operations</span>
<svg style="left:157px;top:279.5px" width="10" height="8" viewBox="0 0 10 8"><path d="M1.200 1.600L5 5.400L8.800 1.600" fill="none" stroke="#fff" stroke-width="2"/></svg>
<svg style="left:14.3px;top:320.4px" width="17" height="15" viewBox="0 0 17 15" fill="none" stroke="#fff" stroke-width="1.3" stroke-linecap="round" stroke-linejoin="round"><path d="M1.200 5.200L8.500 .9L15.800 5.200V6.200H1.200z"/><circle cx="8.500" cy="3.900" r=".7"/><path d="M3.300 6.400V11.200M6.700 6.400V11.200M10.300 6.400V11.200M13.700 6.400V11.200M2 11.600H15M.8 14H16.200"/></svg>
<span class="t" style="left:42.10px;top:318px;color:#fff;letter-spacing:0.25px;-webkit-text-stroke:.45px currentColor;">Banking</span>
<svg style="left:157px;top:323.5px" width="10" height="8" viewBox="0 0 10 8"><path d="M1.200 1.600L5 5.400L8.800 1.600" fill="none" stroke="#fff" stroke-width="2"/></svg>
<svg style="left:14.6px;top:364px" width="17" height="16" viewBox="0 0 17 16" fill="none" stroke="#fff" stroke-width="1.15" stroke-linecap="round" stroke-linejoin="round"><circle cx="4.300" cy="2.700" r="1.800"/><circle cx="12.700" cy="2.700" r="1.800"/><circle cx="8.500" cy="8" r="1.700"/><ellipse cx="8.500" cy="13.100" rx="3.100" ry="2.100"/><path d="M4.800 9.700H3.300a2.100 2.100 0 0 1 0-4.200H5.300M12.200 9.700H13.700a2.100 2.100 0 0 0 0-4.200H11.700"/></svg>
<span class="t" style="left:42.10px;top:362px;color:#fff;letter-spacing:0.19px;-webkit-text-stroke:.45px currentColor;">Remitters</span>
<svg style="left:157px;top:367.5px" width="10" height="8" viewBox="0 0 10 8"><path d="M1.200 1.600L5 5.400L8.800 1.600" fill="none" stroke="#fff" stroke-width="2"/></svg>
<svg style="left:16px;top:408px" width="14" height="16" viewBox="0 0 14 16" fill="none" stroke="#fff" stroke-width="1.3" stroke-linecap="round" stroke-linejoin="round"><path d="M1 14.600V3A2 2 0 0 1 3 1H11A2 2 0 0 1 13 3V14.600L11 13.200L9 14.800L7 13.200L5 14.800L3 13.200z"/><path d="M4.800 6.800H9.200"/></svg>
<span class="t" style="left:42.99px;top:406px;color:#fff;-webkit-text-stroke:.45px currentColor;">Transactions</span>
<svg style="left:157px;top:411.5px" width="10" height="8" viewBox="0 0 10 8"><path d="M1.200 1.600L5 5.400L8.800 1.600" fill="none" stroke="#fff" stroke-width="2"/></svg>
<svg style="left:16px;top:451px" width="20" height="18" viewBox="0 0 20 18" fill="none" stroke="#fff" stroke-width="1.5" stroke-linecap="round" stroke-linejoin="round"><path d="M1 3.600H4.200Q5.600 3.600 6.400 4.800L11.600 13.200Q12.400 14.400 13.800 14.400H16M1 14.400H4.200Q5.600 14.400 6.400 13.200L7.700 11.100M10.300 6.900L11.600 4.800Q12.400 3.600 13.800 3.600H16"/><path d="M16.200 1.600L19 3.600L16.200 5.600z" fill="#fff" stroke-width=".5"/><path d="M16.200 12.400L19 14.400L16.200 16.400z" fill="#fff" stroke-width=".5"/></svg>
<span class="t" style="left:48.20px;top:450px;color:#fff;letter-spacing:0.44px;-webkit-text-stroke:.45px currentColor;">Import/Export</span>
<svg style="left:157px;top:457px" width="10" height="8" viewBox="0 0 10 8"><path d="M1.200 5.800L5 2L8.800 5.800" fill="none" stroke="#fff" stroke-width="2"/></svg>
<svg style="left:15.4px;top:501px" width="15.5" height="14" viewBox="0 0 20 18" fill="none" stroke="#fff" stroke-width="1.7" stroke-linecap="round" stroke-linejoin="round"><path d="M1 3.600H4.200Q5.600 3.600 6.400 4.800L11.600 13.200Q12.400 14.400 13.800 14.400H16M1 14.400H4.200Q5.600 14.400 6.400 13.200L7.700 11.100M10.300 6.900L11.600 4.800Q12.400 3.600 13.800 3.600H16"/><path d="M16.200 1.600L19 3.600L16.200 5.600z" fill="#fff" stroke-width=".5"/><path d="M16.200 12.400L19 14.400L16.200 16.400z" fill="#fff" stroke-width=".5"/></svg>
<span class="t" style="left:42.10px;top:498px;color:#fff;letter-spacing:-0.16px;-webkit-text-stroke:.45px currentColor;">Partner APIs</span>
<svg style="left:14.6px;top:543.6px" width="17" height="17" viewBox="0 0 17 17" fill="none" stroke="#fff" stroke-width="1.3" stroke-linecap="round" stroke-linejoin="round"><rect x=".8" y=".8" width="15.400" height="11.200" rx="2.400"/><path d="M.8 8.800H16.200M8.500 12V15.600M4.800 15.900H12.200"/></svg>
<span class="t" style="left:42.10px;top:542px;color:#fff;letter-spacing:-0.08px;-webkit-text-stroke:.45px currentColor;">Manage Formats</span>
<svg style="left:14.8px;top:590.5px" width="17" height="11" viewBox="0 0 17 11" fill="none" stroke="#fff" stroke-width="1.25" stroke-linecap="round" stroke-linejoin="round"><path d="M1 2.200Q1 .7 2.400 1.400L7.400 4.400Q8.800 5.500 7.400 6.600L2.400 9.600Q1 10.300 1 8.800z"/><path d="M8.700 2.200Q8.700 .7 10.100 1.400L15.100 4.400Q16.500 5.500 15.100 6.600L10.100 9.600Q8.700 10.300 8.700 8.800z"/></svg>
<span class="t" style="left:42.10px;top:586px;color:#fff;letter-spacing:0.02px;-webkit-text-stroke:.45px currentColor;">Push Options</span>
<svg style="left:14.8px;top:634.5px" width="17" height="11" viewBox="0 0 17 11" fill="none" stroke="#fff" stroke-width="1.25" stroke-linecap="round" stroke-linejoin="round"><path d="M1 2.200Q1 .7 2.400 1.400L7.400 4.400Q8.800 5.500 7.400 6.600L2.400 9.600Q1 10.300 1 8.800z"/><path d="M8.700 2.200Q8.700 .7 10.100 1.400L15.100 4.400Q16.500 5.500 15.100 6.600L10.100 9.600Q8.700 10.300 8.700 8.800z"/></svg>
<span class="t" style="left:42.10px;top:630px;color:#fff;-webkit-text-stroke:.45px currentColor;">Push Transactions</span>
<svg style="left:15.4px;top:677px" width="15.5" height="14" viewBox="0 0 20 18" fill="none" stroke="#fff" stroke-width="1.7" stroke-linecap="round" stroke-linejoin="round"><path d="M1 3.600H4.200Q5.600 3.600 6.400 4.800L11.600 13.200Q12.400 14.400 13.800 14.400H16M1 14.400H4.200Q5.600 14.400 6.400 13.200L7.700 11.100M10.300 6.900L11.600 4.800Q12.400 3.600 13.800 3.600H16"/><path d="M16.200 1.600L19 3.600L16.200 5.600z" fill="#fff" stroke-width=".5"/><path d="M16.200 12.400L19 14.400L16.200 16.400z" fill="#fff" stroke-width=".5"/></svg>
<span class="t" style="left:42.10px;top:674px;color:#fff;letter-spacing:0.17px;-webkit-text-stroke:.45px currentColor;">Pull Options</span>
<svg style="left:15px;top:720px" width="16" height="16" viewBox="0 0 16 16" fill="none" stroke="#e4525c" stroke-width="1.4" stroke-linecap="round" stroke-linejoin="round"><path d="M8 1V10.200M4.400 6.800L8 10.400L11.600 6.800M1 10.800V13.400A1.600 1.600 0 0 0 2.600 15H13.400A1.600 1.600 0 0 0 15 13.400V10.800"/></svg>
<span class="t" style="left:42.10px;top:718px;color:#e4525c;letter-spacing:0.05px;-webkit-text-stroke:.2px currentColor;">Download Tranx</span>
<svg style="left:14.6px;top:768px" width="17" height="16" viewBox="0 0 17 16" fill="none" stroke="#fff" stroke-width="1.15" stroke-linecap="round" stroke-linejoin="round"><circle cx="4.300" cy="2.700" r="1.800"/><circle cx="12.700" cy="2.700" r="1.800"/><circle cx="8.500" cy="8" r="1.700"/><ellipse cx="8.500" cy="13.100" rx="3.100" ry="2.100"/><path d="M4.800 9.700H3.300a2.100 2.100 0 0 1 0-4.200H5.300M12.200 9.700H13.700a2.100 2.100 0 0 0 0-4.200H11.700"/></svg>
<span class="t" style="left:42.10px;top:766px;color:#fff;letter-spacing:0.07px;-webkit-text-stroke:.45px currentColor;">Beneficiaries</span>
<svg style="left:157px;top:771.5px" width="10" height="8" viewBox="0 0 10 8"><path d="M1.200 1.600L5 5.400L8.800 1.600" fill="none" stroke="#fff" stroke-width="2"/></svg>
<svg style="left:14.6px;top:811.5px" width="17" height="17" viewBox="0 0 17 17" fill="none" stroke="#fff" stroke-width="1.25" stroke-linecap="round" stroke-linejoin="round"><path d="M1 12.600V8.200A7.500 7.500 0 0 1 16 8.200V12.600"/><ellipse cx="3.200" cy="12.500" rx="2.200" ry="2.700"/><ellipse cx="13.800" cy="12.500" rx="2.200" ry="2.700"/></svg>
<span class="t" style="left:42.49px;top:810px;color:#fff;letter-spacing:-0.20px;-webkit-text-stroke:.45px currentColor;">Customer Care</span>
<svg style="left:157px;top:815.5px" width="10" height="8" viewBox="0 0 10 8"><path d="M1.200 1.600L5 5.400L8.800 1.600" fill="none" stroke="#fff" stroke-width="2"/></svg>
<svg style="left:15px;top:855.5px" width="16" height="17" viewBox="0 0 16 17" fill="none" stroke="#fff" stroke-width="1.25" stroke-linecap="round" stroke-linejoin="round"><path d="M1 6.400V5.200Q1 4.200 2 4.200H14Q15 4.200 15 5.200V6.400z"/><path d="M2 6.600V13.400A2.400 2.400 0 0 0 4.400 15.800H11.600A2.400 2.400 0 0 0 14 13.400V6.600"/><path d="M5.800 6.800V11.200L8 10L10.200 11.200V6.800"/><path d="M4.600 4C3.400 2.600 4.600 1.200 6 1.800C7 2.200 7.600 3.200 8 4C8.400 3.200 9 2.200 10 1.800C11.400 1.200 12.600 2.600 11.400 4"/></svg>
<span class="t" style="left:42.10px;top:854px;color:#fff;letter-spacing:0.39px;-webkit-text-stroke:.45px currentColor;">Promotions</span>
<svg style="left:157px;top:859.5px" width="10" height="8" viewBox="0 0 10 8"><path d="M1.200 1.600L5 5.400L8.800 1.600" fill="none" stroke="#fff" stroke-width="2"/></svg>
<svg style="left:15.3px;top:899.5px" width="15" height="17" viewBox="0 0 15 17" fill="none" stroke="#fff" stroke-width="1.2" stroke-linecap="round" stroke-linejoin="round"><rect x=".800" y="4.400" width="2.900" height="9.200" rx="1.200"/><rect x="6.050" y="2.600" width="2.900" height="11" rx="1.200"/><rect x="11.300" y=".8" width="2.900" height="12.800" rx="1.200"/><path d="M.6 16.200H14.400"/></svg>
<span class="t" style="left:42.10px;top:898px;color:#fff;letter-spacing:0.03px;-webkit-text-stroke:.45px currentColor;">Reports</span>
<svg style="left:157px;top:903.5px" width="10" height="8" viewBox="0 0 10 8"><path d="M1.200 1.600L5 5.400L8.800 1.600" fill="none" stroke="#fff" stroke-width="2"/></svg>
</aside>
<div style="left:185px;top:0px;width:15px;height:945px;background:#fff"></div>
<svg style="left:187px;top:5px" width="11" height="7" viewBox="0 0 11 7"><path d="M5.5 0L10.5 6.500H.5z" fill="#8c8c8c"/></svg>
<svg style="left:187px;top:934px" width="11" height="7" viewBox="0 0 11 7"><path d="M5.500 7L10.500 .5H.5z" fill="#8c8c8c"/></svg>
<div style="left:188px;top:18px;width:9px;height:807px;background:#8d8d8d;border-radius:5px"></div>
</div></body></html>
